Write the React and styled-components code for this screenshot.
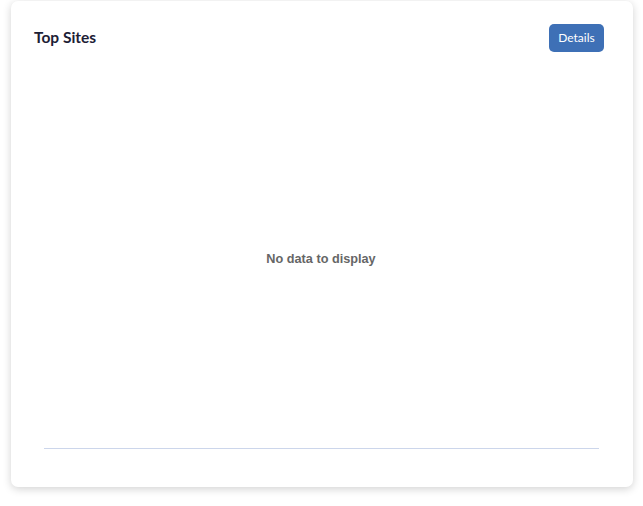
import styled, { createGlobalStyle } from "styled-components";

const GlobalStyle = createGlobalStyle`
  html, body {
    margin: 0;
    padding: 0;
    background: #ffffff;
  }
  body {
    font-family: Lato, "Open Sans", Arial, sans-serif;
  }
`;

const Page = styled.div`
  padding: 1px 10px 20px 11px;
`;

const Card = styled.section`
  width: 622px;
  height: 486px;
  box-sizing: border-box;
  background: #ffffff;
  border-radius: 7px;
  box-shadow: 0 2px 8px rgba(0, 0, 0, 0.18);
  padding: 23px 29px 0 23px;
  display: flex;
  flex-direction: column;
`;

const Header = styled.header`
  display: flex;
  justify-content: space-between;
  align-items: center;
  height: 28px;
`;

const Title = styled.h2`
  margin: 0 0 1px;
  font-size: 15.5px;
  font-weight: 700;
  color: #1c2035;
  line-height: 1;
`;

const Button = styled.button`
  width: 55px;
  height: 28px;
  border: none;
  border-radius: 5px;
  background: #3e70b6;
  color: #ffffff;
  font-family: Lato, "Open Sans", Arial, sans-serif;
  font-size: 12px;
  line-height: 1;
  cursor: pointer;
  padding: 0;
`;

const Chart = styled.svg`
  display: block;
  margin-top: 8px;
  width: 570px;
  height: 410px;
`;

export default function App() {
  return (
    <>
      <GlobalStyle />
      <Page>
        <Card>
          <Header>
            <Title>Top Sites</Title>
            <Button>Details</Button>
          </Header>
          <Chart>
            <line x1="10" x2="565" y1="388.5" y2="388.5" stroke="#ccd6eb" strokeWidth="1" />
            <text
              x="287"
              y="203"
              textAnchor="middle"
              fontFamily="'Liberation Sans', Arial, sans-serif"
              fontSize="12.7"
              fontWeight="bold"
              fill="#666666"
            >
              No data to display
            </text>
          </Chart>
        </Card>
      </Page>
    </>
  );
}
